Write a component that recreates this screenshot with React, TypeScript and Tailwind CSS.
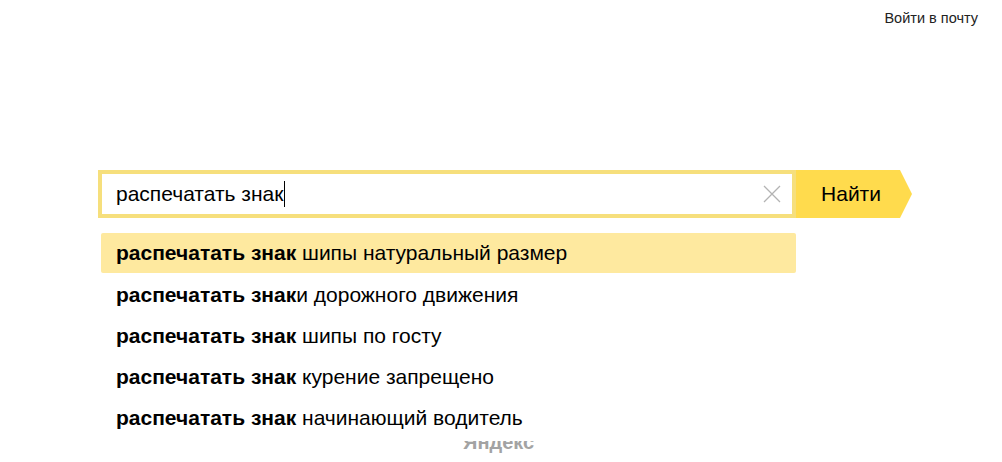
import React from "react";

const query = "распечатать знак";

const suggestions = [
  { bold: "распечатать знак", rest: " шипы натуральный размер" },
  { bold: "распечатать знак", rest: "и дорожного движения" },
  { bold: "распечатать знак", rest: " шипы по госту" },
  { bold: "распечатать знак", rest: " курение запрещено" },
  { bold: "распечатать знак", rest: " начинающий водитель" },
];

const ClearIcon = () => (
  <svg width="18" height="18" viewBox="0 0 18 18" aria-hidden>
    <path d="M1 1L17 17M17 1L1 17" stroke="#b3b3b3" strokeWidth="1.3" fill="none" />
  </svg>
);

export default function App() {
  const active = 0;

  return (
    <div className="relative h-[462px] w-[1002px] overflow-hidden bg-white font-['Liberation_Sans',Arial,sans-serif] text-black">
      <header className="flex justify-end pr-[24px] pt-[9px]">
        <a className="text-[14.5px] leading-[18px] text-[#222]">Войти в почту</a>
      </header>

      <div className="relative ml-[98px] mt-[143px] flex h-[48px] w-[814px]">
        <div className="flex h-full w-[698px] items-center border-[4px] border-[#f6df7c] bg-white pl-[14px] pr-[11px]">
          <div className="flex flex-1 items-center text-[21px] leading-[24px]">
            {query}
            <span className="ml-px inline-block h-[26px] w-px bg-black" />
          </div>
          <ClearIcon />
        </div>
        <button
          type="button"
          className="h-full w-[116px] bg-[#ffdb4d] pr-[6px] text-[21px] text-black [clip-path:polygon(0_0,104px_0,116px_50%,104px_100%,0_100%)]"
        >
          Найти
        </button>

        <ul className="absolute left-0 top-[50px] z-10 w-[698px] bg-white pt-[13px] pb-[3px]">
          {suggestions.map((s, i) => (
            <li
              key={i}
              className={`block whitespace-pre text-[21px] ${
                i === active
                  ? "mb-px ml-[3px] h-[40px] rounded-[2px] bg-[#fee99f] pl-[15px] leading-[40px]"
                  : "h-[41px] pl-[18px] leading-[41px]"
              }`}
            >
              <b className="font-bold">{s.bold}</b>
              {s.rest}
            </li>
          ))}
        </ul>
      </div>

      <div className="ml-[463px] mt-[212px] text-[20px] font-bold leading-[24px] text-[#a3a3a3]">
        Яндекс
      </div>
    </div>
  );
}
